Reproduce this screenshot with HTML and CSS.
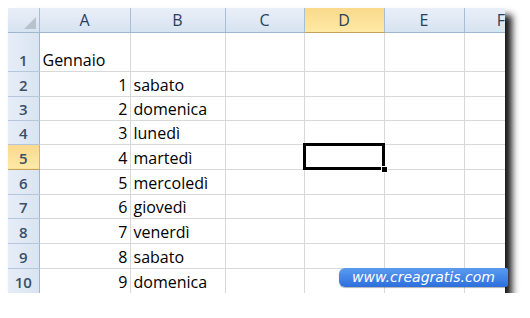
FILE: index.html
```html
<!doctype html>
<html>
  <head>
    <title>Foglio</title>
    <link rel="stylesheet" href="styles.css">
  </head>
  <body>
    <div class="sheet">
      <table class="grid">
        <colgroup>
          <col class="c-head">
          <col class="c-a">
          <col class="c-b">
          <col class="c-c">
          <col class="c-d">
          <col class="c-e">
          <col class="c-f">
        </colgroup>
        <tr class="col-heads">
          <th class="corner"><span class="corner-tri"></span></th>
          <th>A</th>
          <th>B</th>
          <th>C</th>
          <th class="sel">D</th>
          <th>E</th>
          <th class="cut">F</th>
        </tr>
        <tr class="tall">
          <th class="row-head">1</th>
          <td class="txt">Gennaio</td><td></td><td></td><td></td><td></td><td></td>
        </tr>
        <tr class="h25">
          <th class="row-head">2</th>
          <td class="num">1</td><td class="txt">sabato</td><td></td><td></td><td></td><td></td>
        </tr>
        <tr class="h24">
          <th class="row-head">3</th>
          <td class="num">2</td><td class="txt">domenica</td><td></td><td></td><td></td><td></td>
        </tr>
        <tr class="h24">
          <th class="row-head">4</th>
          <td class="num">3</td><td class="txt">lunedì</td><td></td><td></td><td></td><td></td>
        </tr>
        <tr class="h25">
          <th class="row-head sel">5</th>
          <td class="num">4</td><td class="txt">martedì</td><td></td><td class="active"><span class="handle"></span></td><td></td><td></td>
        </tr>
        <tr class="h25">
          <th class="row-head">6</th>
          <td class="num">5</td><td class="txt">mercoledì</td><td></td><td></td><td></td><td></td>
        </tr>
        <tr class="h24">
          <th class="row-head">7</th>
          <td class="num">6</td><td class="txt">giovedì</td><td></td><td></td><td></td><td></td>
        </tr>
        <tr class="h25">
          <th class="row-head">8</th>
          <td class="num">7</td><td class="txt">venerdì</td><td></td><td></td><td></td><td></td>
        </tr>
        <tr class="h25">
          <th class="row-head">9</th>
          <td class="num">8</td><td class="txt">sabato</td><td></td><td></td><td></td><td></td>
        </tr>
        <tr class="h25">
          <th class="row-head">10</th>
          <td class="num">9</td><td class="txt">domenica</td><td></td><td></td><td></td><td></td>
        </tr>
      </table>
      <div class="stamp">www.creagratis.com</div>
    </div>
  </body>
</html>
```
FILE: styles.css
```css
body {
  margin: 0;
  background: #ffffff;
  font-family: "Open Sans", "Liberation Sans", sans-serif;
}
.sheet {
  position: relative;
  margin: 8px 0 0 8px;
  width: 497px;
  height: 285px;
  background: #ffffff;
  box-shadow: 7px 7px 7px rgba(0, 0, 0, 0.9);
}
.grid {
  border-collapse: collapse;
  table-layout: fixed;
  width: 497px;
  font-size: 16px;
  color: #000000;
}
.c-head { width: 31px; }
.c-a { width: 91px; }
.c-b { width: 95px; }
.c-c { width: 79px; }
.c-d { width: 80px; }
.c-e { width: 80px; }
.c-f { width: 41px; }

.grid td {
  border: 1px solid #d8d8d8;
  padding: 0 2px 1px 3px;
  white-space: nowrap;
  overflow: visible;
  vertical-align: bottom;
  line-height: 20px;
}
.grid tr:first-child + tr td { border-top: none; }
.grid td:last-child { border-right: none; }
.grid tr:last-child td { border-bottom: none; }

.col-heads { height: 24px; }
.col-heads th {
  font-weight: normal;
  font-size: 16px;
  color: #27415f;
  background: linear-gradient(#e9eff8, #d7e3f1);
  border-right: 1px solid #a9bdd5;
  border-bottom: 1px solid #9eb6ce;
  padding: 0;
}
.col-heads th.cut {
  text-align: right;
  border-right: none;
  padding-right: 0;
}
.col-heads th.sel,
.row-head.sel {
  background: linear-gradient(#f9d98c, #ffe9a5);
  border-bottom-color: #c2a35a;
}
.corner {
  position: relative;
}
.corner-tri {
  position: absolute;
  right: 3px;
  bottom: 3px;
  width: 0;
  height: 0;
  border-left: 12px solid transparent;
  border-bottom: 12px solid #b7c2cf;
}
.row-head {
  font-weight: 600;
  font-size: 15px;
  color: #3a4f6a;
  background: linear-gradient(90deg, #e6edf7, #d9e4f2);
  border-right: 1px solid #9eb6ce;
  border-bottom: 1px solid #b5c7dc;
  vertical-align: bottom;
  text-align: center;
  line-height: 20px;
  padding: 0 0 1px 0;
}
.tall { height: 39px; }
.h24 { height: 24px; }
.h25 { height: 25px; }
.num { text-align: right; }
.txt { text-align: left; }

.active {
  position: relative;
  outline: 3px solid #000000;
  outline-offset: -2px;
}
.handle {
  position: absolute;
  right: -4px;
  bottom: -4px;
  width: 5px;
  height: 5px;
  background: #000000;
  border: 1px solid #ffffff;
}

.stamp {
  position: absolute;
  left: 331px;
  top: 260px;
  width: 169px;
  height: 19px;
  line-height: 19px;
  border-radius: 6px 2px 2px 6px;
  background: linear-gradient(#5a9cf0, #2d6fdc);
  color: #ffffff;
  font-family: "DejaVu Sans", Verdana, sans-serif;
  font-style: italic;
  font-size: 14px;
  text-align: center;
  box-shadow: 0 1px 1px rgba(0, 0, 0, 0.3);
}
```
